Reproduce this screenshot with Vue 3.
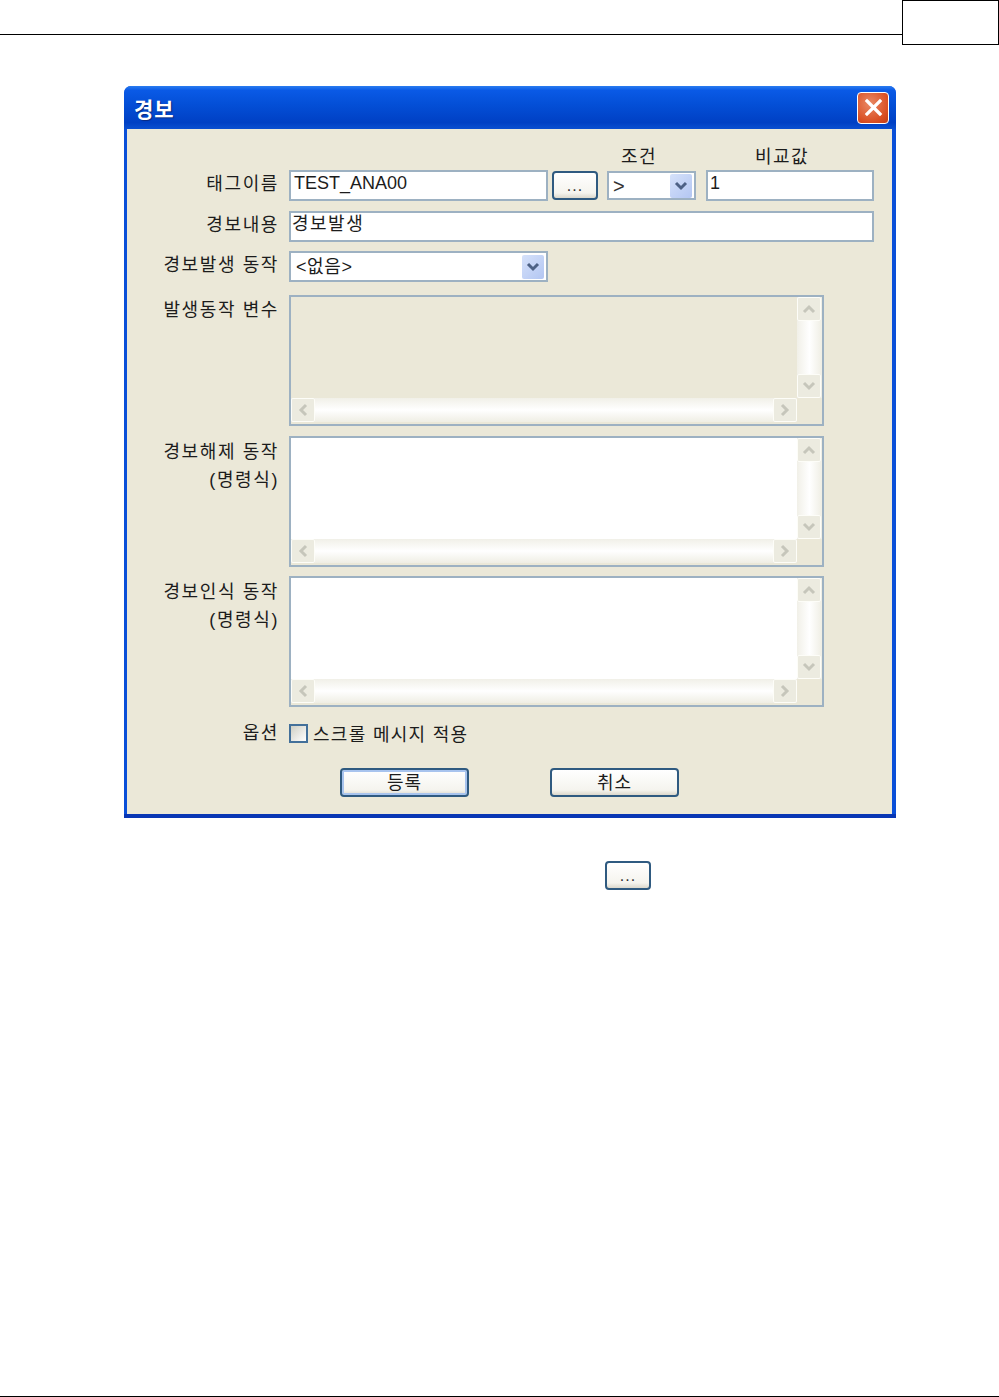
<script setup>
const boxes = [
  { id: 'var', labels: ['발생동작 변수'], disabled: true },
  { id: 'off', labels: ['경보해제 동작', '(명령식)'], disabled: false },
  { id: 'ack', labels: ['경보인식 동작', '(명령식)'], disabled: false }
]
</script>

<template>
  <div class="page">
    <div class="page-head">
      <div class="head-line"></div>
      <div class="head-box"></div>
    </div>

    <div class="win">
      <div class="title">
        <span class="title-text">경보</span>
        <button class="close">
          <svg width="19" height="19" viewBox="0 0 19 19">
            <path d="M3 3 L16 16 M16 3 L3 16" stroke="#fff" stroke-width="3.2" stroke-linecap="square" fill="none" />
          </svg>
        </button>
      </div>

      <div class="client">
        <div class="caps">
          <span class="cap cap-cond">조건</span>
          <span class="cap cap-val">비교값</span>
        </div>

        <div class="row row-tag">
          <label class="lbl">태그이름</label>
          <div class="input w-tag">TEST_ANA00</div>
          <button class="btn btn-dots">...</button>
          <div class="input select w-cond">
            <span class="gt">&gt;</span>
            <span class="arrow">
              <svg width="14" height="10" viewBox="0 0 14 10"><path d="M2 2 L7 7 L12 2" stroke="#4d6185" stroke-width="3" fill="none" /></svg>
            </span>
          </div>
          <div class="input w-val">1</div>
        </div>

        <div class="row row-msg">
          <label class="lbl">경보내용</label>
          <div class="input w-full kr">경보발생</div>
        </div>

        <div class="row row-act">
          <label class="lbl">경보발생 동작</label>
          <div class="input select w-tag">
            <span class="sel-text">&lt;없음&gt;</span>
            <span class="arrow">
              <svg width="14" height="10" viewBox="0 0 14 10"><path d="M2 2 L7 7 L12 2" stroke="#4d6185" stroke-width="3" fill="none" /></svg>
            </span>
          </div>
        </div>

        <div v-for="b in boxes" :key="b.id" class="row row-box" :class="'box-' + b.id">
          <label class="lbl lbl-multi">
            <span v-for="l in b.labels" :key="l">{{ l }}</span>
          </label>
          <div class="memo" :class="{ off: b.disabled }">
            <div class="memo-top">
              <div class="memo-text"></div>
              <div class="vbar">
                <span class="sb">
                  <svg width="14" height="10" viewBox="0 0 14 10"><path d="M2 8 L7 3 L12 8" stroke="#c6c6bb" stroke-width="3" fill="none" /></svg>
                </span>
                <span class="sb">
                  <svg width="14" height="10" viewBox="0 0 14 10"><path d="M2 2 L7 7 L12 2" stroke="#c6c6bb" stroke-width="3" fill="none" /></svg>
                </span>
              </div>
            </div>
            <div class="memo-bot">
              <div class="hbar">
                <span class="sb">
                  <svg width="10" height="14" viewBox="0 0 10 14"><path d="M8 2 L3 7 L8 12" stroke="#c6c6bb" stroke-width="3" fill="none" /></svg>
                </span>
                <span class="sb">
                  <svg width="10" height="14" viewBox="0 0 10 14"><path d="M2 2 L7 7 L2 12" stroke="#c6c6bb" stroke-width="3" fill="none" /></svg>
                </span>
              </div>
            </div>
          </div>
        </div>

        <div class="row row-opt">
          <label class="lbl">옵션</label>
          <span class="check"></span>
          <span class="opt-text">스크롤 메시지 적용</span>
        </div>

        <div class="actions">
          <button class="btn btn-ok">등록</button>
          <button class="btn btn-cancel">취소</button>
        </div>
      </div>
    </div>

    <div class="below">
      <button class="btn btn-dots btn-alone">...</button>
    </div>

    <div class="foot-line"></div>
  </div>
</template>

<style scoped>
.page {
  width: 999px;
  height: 1397px;
  background: #fff;
  display: flex;
  flex-direction: column;
  font-family: "Liberation Sans", "Noto Sans CJK KR", sans-serif;
  color: #1c1c1c;
  overflow: hidden;
}

.page-head {
  display: flex;
  align-items: flex-start;
}

.head-line {
  width: 902px;
  height: 35px;
  border-bottom: 1px solid #000;
  box-sizing: border-box;
}

.head-box {
  width: 97px;
  height: 45px;
  border: 1px solid #000;
  box-sizing: border-box;
}

.win {
  width: 772px;
  height: 732px;
  margin: 41px 0 0 124px;
  box-sizing: border-box;
  display: flex;
  flex-direction: column;
  border-radius: 7px 7px 0 0;
  border-bottom: 4px solid #0836b4;
  overflow: hidden;
  background: #0a4fd8;
}

.title {
  height: 43px;
  flex: none;
  display: flex;
  align-items: center;
  justify-content: space-between;
  padding: 0 7px 0 10px;
  background: linear-gradient(#2a7cf0 0, #0a5ae6 10%, #0450d8 40%, #0040c4 85%, #0a4fd0 100%);
}

.title-text {
  color: #fff;
  font-size: 21px;
  font-weight: 700;
  line-height: 28px;
  padding-top: 5px;
  letter-spacing: 1px;
  text-shadow: 1px 1px 1px #0a2a80;
}

.close {
  width: 32px;
  height: 32px;
  padding: 0;
  display: flex;
  align-items: center;
  justify-content: center;
  border: 1px solid #fff;
  border-radius: 4px;
  background: radial-gradient(circle at 40% 35%, #ea8a66, #d94e22 70%, #c23d14);
}

.client {
  flex: 1;
  margin: 0 4px 0 3px;
  background: #ebe8d8;
  display: flex;
  flex-direction: column;
}

.caps {
  height: 41px;
  display: flex;
  font-size: 18px;
  line-height: 56px;
}

.cap {
  display: block;
  text-align: center;
  letter-spacing: 1.4px;
}

.cap-cond {
  margin-left: 480px;
  width: 64px;
}

.cap-val {
  margin-left: 73px;
  width: 76px;
}

.row {
  display: flex;
  align-items: flex-start;
}

.lbl {
  width: 152px;
  margin-right: 10px;
  flex: none;
  text-align: right;
  font-size: 18px;
  line-height: 28px;
  letter-spacing: 1.6px;
  white-space: nowrap;
}

.lbl-multi {
  display: flex;
  flex-direction: column;
  align-items: flex-end;
}

.input {
  box-sizing: border-box;
  background: #fff;
  border: 2px solid #9db1c2;
  height: 31px;
  font-size: 18px;
  line-height: 22px;
  padding-left: 3px;
  display: flex;
  align-items: flex-start;
  white-space: nowrap;
}

.kr {
  padding-left: 1px;
  letter-spacing: 1.5px;
}

.w-tag { width: 259px; }
.w-val { width: 168px; margin-left: 10px; padding-left: 2px; }
.w-full { width: 585px; }

.w-cond {
  width: 89px;
  height: 29px;
  margin: 1px 0 0 9px;
}

.select {
  justify-content: space-between;
  align-items: center;
  padding-right: 2px;
}

.gt {
  padding-left: 1px;
  font-size: 20px;
  color: #333;
}

.sel-text {
  padding-left: 2px;
  letter-spacing: 0.6px;
}

.arrow {
  width: 22px;
  height: 24px;
  border-radius: 2px;
  background: linear-gradient(135deg, #d5e1fa, #b3c6f2);
  display: flex;
  align-items: center;
  justify-content: center;
}

.btn {
  box-sizing: border-box;
  padding: 0;
  font-family: inherit;
  color: #1c1c1c;
  background: linear-gradient(#fff, #f5f4ee 80%, #dcd8cc);
  border: 2px solid #2f5a80;
  border-radius: 4px;
}

.btn-dots {
  width: 46px;
  height: 29px;
  margin: 1px 0 0 4px;
  font-size: 16px;
  line-height: 20px;
  letter-spacing: 1px;
  color: #333;
}

.row-tag { height: 41px; }
.row-msg { height: 40px; }
.row-act { height: 44px; }

.box-var { height: 141px; }
.box-off { height: 140px; }
.box-ack { height: 136px; }

.row-box .lbl { line-height: 27.5px; padding-top: 3px; }
.box-var .lbl { padding-top: 2px; }

.memo {
  box-sizing: border-box;
  width: 535px;
  height: 131px;
  border: 2px solid #9db1c2;
  background: #ebe8d8;
  display: flex;
  flex-direction: column;
}

.memo-top {
  flex: 1;
  display: flex;
  min-height: 0;
}

.memo-text {
  flex: 1;
  background: #fff;
}

.memo.off .memo-text { background: #ebe8d8; }

.vbar {
  width: 24px;
  padding-right: 1px;
  display: flex;
  flex-direction: column;
  justify-content: space-between;
  background: linear-gradient(90deg, #f1f0e8, #fff 50%, #efeee4);
}

.memo-bot {
  height: 26px;
  flex: none;
  padding-right: 25px;
  background: #ebe8d8;
}

.hbar {
  height: 24px;
  display: flex;
  justify-content: space-between;
  background: linear-gradient(#f1f0e8, #fff 50%, #efeee4);
}

.sb {
  box-sizing: border-box;
  width: 24px;
  height: 24px;
  display: flex;
  align-items: center;
  justify-content: center;
  background: #ecebe0;
  border: 1px solid #fdfdf8;
  border-radius: 2px;
}

.row-opt {
  height: 42px;
  align-items: center;
}

.row-opt .lbl { line-height: 24px; }

.check {
  box-sizing: border-box;
  width: 19px;
  height: 19px;
  border: 2px solid #43709a;
  background: linear-gradient(135deg, #cfcfc4, #fff);
}

.opt-text {
  margin-left: 5px;
  font-size: 18px;
  letter-spacing: 1.3px;
}

.actions {
  display: flex;
  margin-left: 213px;
  padding-top: 14px;
}

.btn-ok, .btn-cancel {
  width: 129px;
  height: 29px;
  font-size: 18px;
  line-height: 22px;
  letter-spacing: 1px;
}

.btn-ok {
  box-shadow: inset 0 0 0 2px #a8c4ee;
}

.btn-cancel {
  margin-left: 81px;
}

.below {
  padding: 43px 0 0 605px;
}

.btn-alone {
  margin: 0;
  display: block;
}

.foot-line {
  margin-top: auto;
  height: 1px;
  background: #000;
}
</style>
